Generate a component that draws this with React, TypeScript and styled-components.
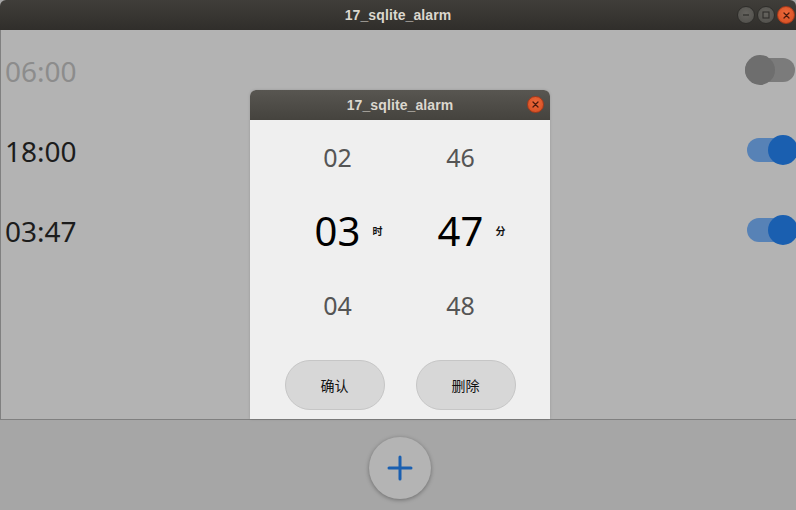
import React from "react";
import styled, { createGlobalStyle } from "styled-components";

const Global = createGlobalStyle`
  html, body { margin: 0; padding: 0; }
  body { width: 796px; height: 510px; overflow: hidden; background: #a6a6a6;
    font-family: "Noto Sans", "Noto Sans CJK SC", sans-serif; }
`;

const Page = styled.div`
  width: 796px;
  height: 510px;
  display: flex;
  flex-direction: column;
`;

const TitleBar = styled.div`
  height: 30px;
  flex: none;
  background: linear-gradient(#403e3a, #302e2b);
  display: flex;
  align-items: center;
  justify-content: center;
  position: relative;
  border-radius: 6px 6px 0 0;
`;

const Title = styled.div`
  font-family: "Liberation Sans", sans-serif;
  font-weight: bold;
  font-size: 14px;
  color: #dcd8cf;
  letter-spacing: 0.1px;
`;

const WinButtons = styled.div`
  position: absolute;
  right: 1px;
  top: 6px;
  display: flex;
  gap: 2px;
`;

const WinBtn = styled.div<{ $close?: boolean }>`
  width: 18px;
  height: 18px;
  border-radius: 50%;
  box-sizing: border-box;
  background: ${(p) => (p.$close ? "radial-gradient(circle at 50% 40%, #ee6a3c, #d24c20)" : "radial-gradient(circle at 50% 40%, #65635e, #4e4d49)")};
  border: 1px solid ${(p) => (p.$close ? "#a8391a" : "#2e2d2a")};
  display: flex;
  align-items: center;
  justify-content: center;
`;

const Main = styled.div`
  flex: 1;
  position: relative;
  background: #b3b3b3;
  border-left: 1px solid #808080;
  border-bottom: 1px solid #808080;
`;

const Row = styled.div`
  height: 80px;
  display: flex;
  align-items: center;
  justify-content: space-between;
  padding-left: 4px;
`;

const Time = styled.div<{ $dim?: boolean }>`
  font-size: 28px;
  color: ${(p) => (p.$dim ? "#8c8c8c" : "#1c1c1c")};
  line-height: 1;
  margin-top: 2px;
`;

const Track = styled.div<{ $on: boolean }>`
  position: relative;
  width: 50px;
  height: 24px;
  border-radius: 12px;
  background: ${(p) => (p.$on ? "#5782b6" : "#7b7b7b")};
  margin-right: ${(p) => (p.$on ? "-1px" : "1px")};
`;

const Knob = styled.div<{ $on: boolean }>`
  position: absolute;
  top: -3px;
  ${(p) => (p.$on ? "right: -1px;" : "left: 0;")}
  width: 30px;
  height: 30px;
  border-radius: 50%;
  background: ${(p) => (p.$on ? "#1a5fb0" : "#6e6e6e")};
`;

const Dialog = styled.div`
  position: absolute;
  left: 249px;
  top: 60px;
  width: 300px;
  bottom: 0;
  display: flex;
  flex-direction: column;
  background: #efefef;
  border-radius: 6px 6px 0 0;
  overflow: hidden;
  box-shadow: 0 0 3px rgba(0, 0, 0, 0.15);
`;

const DialogTitle = styled.div`
  height: 30px;
  flex: none;
  background: linear-gradient(#585651, #45433e);
  display: flex;
  align-items: center;
  justify-content: center;
  position: relative;
`;

const DialogClose = styled(WinBtn)`
  position: absolute;
  right: 6px;
  top: 6px;
  width: 17px;
  height: 17px;
`;

const Picker = styled.div`
  display: grid;
  grid-template-columns: 123px 123px;
  padding: 0 29px 0 26px;
`;

const Column = styled.div`
  display: flex;
  flex-direction: column;
`;

const Cell = styled.div`
  height: 74px;
  display: flex;
  align-items: center;
  justify-content: center;
`;

const Num = styled.span<{ $big?: boolean }>`
  position: relative;
  font-size: ${(p) => (p.$big ? "40px" : "25px")};
  color: ${(p) => (p.$big ? "#000" : "#555")};
  line-height: 1;
`;

const Unit = styled.span`
  position: absolute;
  left: calc(100% + 12px);
  top: 50%;
  transform: translateY(-50%);
  font-size: 10px;
  font-weight: bold;
  font-family: "Noto Sans CJK SC", sans-serif;
  color: #111;
  white-space: nowrap;
`;

const Buttons = styled.div`
  display: flex;
  justify-content: center;
  gap: 31px;
  margin-top: 18px;
`;

const Btn = styled.div`
  width: 100px;
  height: 50px;
  box-sizing: border-box;
  border-radius: 25px;
  background: #d7d7d7;
  border: 1px solid #c6c6c6;
  display: flex;
  align-items: center;
  justify-content: center;
  font-family: "Noto Sans CJK SC", sans-serif;
  font-size: 14px;
  color: #111;
`;

const Bottom = styled.div`
  height: 90px;
  flex: none;
  background: #a6a6a6;
  display: flex;
  align-items: center;
  justify-content: center;
  padding-left: 4px;
`;

const Fab = styled.div`
  width: 62px;
  height: 62px;
  border-radius: 50%;
  background: #b4b4b4;
  box-shadow: 0 1px 4px rgba(0, 0, 0, 0.35);
  display: flex;
  align-items: center;
  justify-content: center;
  margin-top: 5px;
`;

const XGlyph = ({ c }: { c: string }) => (
  <svg width="7" height="7" viewBox="0 0 7 7">
    <path d="M1 1L6 6M6 1L1 6" stroke={c} strokeWidth="1.3" strokeLinecap="round" />
  </svg>
);

const alarms = [
  { t: "06:00", on: false },
  { t: "18:00", on: true },
  { t: "03:47", on: true },
];

export default function App() {
  return (
    <Page>
      <Global />
      <TitleBar>
        <Title>17_sqlite_alarm</Title>
        <WinButtons>
          <WinBtn>
            <svg width="8" height="8" viewBox="0 0 8 8">
              <path d="M1 4H7" stroke="#2e2d2a" strokeWidth="1.2" />
            </svg>
          </WinBtn>
          <WinBtn>
            <svg width="8" height="8" viewBox="0 0 8 8">
              <rect x="1" y="1" width="6" height="6" fill="none" stroke="#2e2d2a" strokeWidth="1.1" />
            </svg>
          </WinBtn>
          <WinBtn $close>
            <XGlyph c="#4a1a0c" />
          </WinBtn>
        </WinButtons>
      </TitleBar>
      <Main>
        {alarms.map((a, i) => (
          <Row key={i}>
            <Time $dim={!a.on}>{a.t}</Time>
            <Track $on={a.on}>
              <Knob $on={a.on} />
            </Track>
          </Row>
        ))}
        <Dialog>
          <DialogTitle>
            <Title>17_sqlite_alarm</Title>
            <DialogClose $close>
              <XGlyph c="#4a1a0c" />
            </DialogClose>
          </DialogTitle>
          <Picker>
            <Column>
              <Cell><Num>02</Num></Cell>
              <Cell><Num $big>03<Unit>时</Unit></Num></Cell>
              <Cell><Num>04</Num></Cell>
            </Column>
            <Column>
              <Cell><Num>46</Num></Cell>
              <Cell><Num $big>47<Unit>分</Unit></Num></Cell>
              <Cell><Num>48</Num></Cell>
            </Column>
          </Picker>
          <Buttons>
            <Btn>确认</Btn>
            <Btn>删除</Btn>
          </Buttons>
        </Dialog>
      </Main>
      <Bottom>
        <Fab>
          <svg width="26" height="26" viewBox="0 0 26 26">
            <path d="M13 2V24M2 13H24" stroke="#1a5fb0" strokeWidth="3" strokeLinecap="round" />
          </svg>
        </Fab>
      </Bottom>
    </Page>
  );
}
